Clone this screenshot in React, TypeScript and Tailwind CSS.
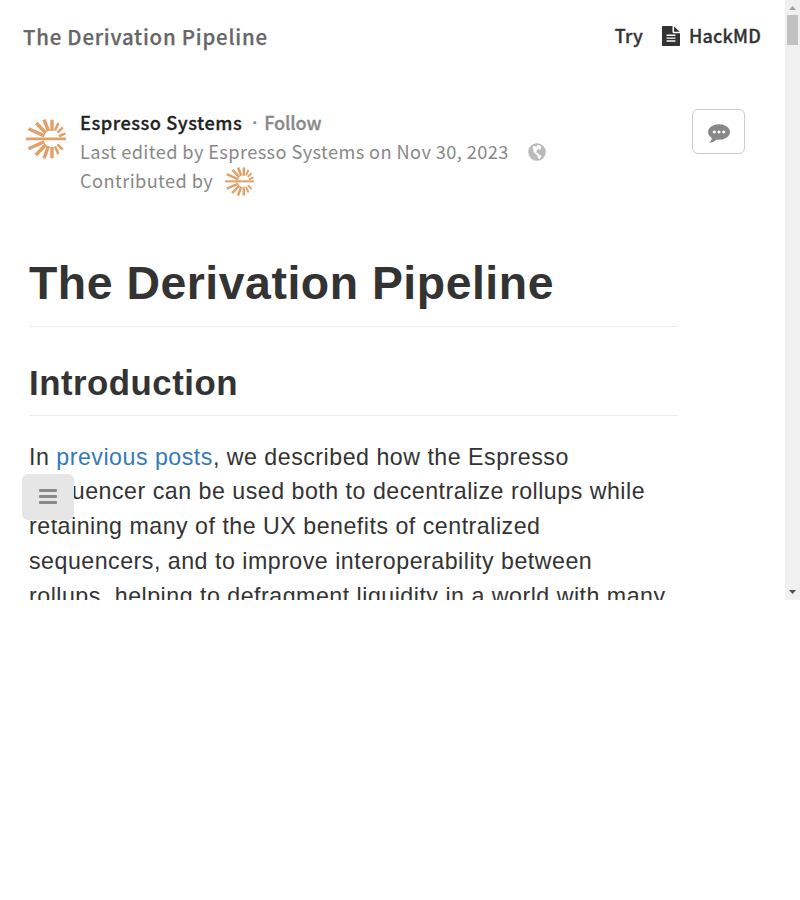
import React from 'react';

const sans = "font-['Noto_Sans_CJK_SC','Open_Sans',sans-serif]";

function Sunburst({ className }: { className: string }) {
  return (
    <svg viewBox="0 0 40 40" className={className} fill="none" stroke="#e0a068">
      <path strokeWidth="2.8" d="M0 19.8H40" />
      <path
        strokeWidth="3.4"
        d="M2.5 9.8 18.3 16.9M10.3 4 19.8 14M18 .7 22.5 12M26 .7V12M2.5 29.7 18.3 22.8M9.8 36 20 25.5M18 39.3 22.5 27M26 39.3V28"
      />
      <path strokeWidth="2.6" d="M32.4 4 29 11.5M36.8 8.4 31.5 13.7M39.3 14.4 33 17.2M32.4 35 29 27.5M36.8 30.6 31.5 25.3" />
    </svg>
  );
}

export default function App() {
  return (
    <div className="h-[900px] w-[800px] overflow-hidden bg-white">
      <div className="relative flex h-[600px] overflow-hidden">
        <main className="h-[600px] w-[785px] overflow-hidden">
          <header className={`flex h-[73px] items-center justify-between pl-[23px] pr-[24px] ${sans}`}>
            <span className="whitespace-nowrap text-[20.4px] font-medium tracking-[0.78px] text-[#666] [-webkit-text-stroke:0.25px_#666]">The Derivation Pipeline</span>
            <div className="flex items-center whitespace-nowrap text-[18px] font-medium tracking-[0.2px] text-[#333] [-webkit-text-stroke:0.3px_#333]">
              <span className="-mt-[2px]">Try</span>
              <svg viewBox="128 0 1536 1792" preserveAspectRatio="none" className="-mt-[1px] ml-[19px] mr-[9px] h-[20px] w-[18px]" fill="#333">
                <path d="M1596 476q14 14 28 36h-472v-472q22 14 36 28zm-476 164h544v1056q0 40-28 68t-68 28h-1344q-40 0-68-28t-28-68v-1600q0-40 28-68t68-28h800v544q0 40 28 68t68 28zm160 736v-64q0-14-9-23t-23-9h-704q-14 0-23 9t-9 23v64q0 14 9 23t23 9h704q14 0 23-9t9-23zm0-256v-64q0-14-9-23t-23-9h-704q-14 0-23 9t-9 23v64q0 14 9 23t23 9h704q14 0 23-9t9-23zm0-256v-64q0-14-9-23t-23-9h-704q-14 0-23 9t-9 23v64q0 14 9 23t23 9h704q14 0 23-9t9-23z" />
              </svg>
              <span className="-mt-[2px]">HackMD</span>
            </div>
          </header>
          <section className={`flex h-[176px] pl-[26px] pr-[40px] pt-[36px] ${sans}`}>
            <Sunburst className="mt-[10px] h-[40px] w-[40px]" />
            <div className="-mt-[1px] ml-[14px] flex-1 whitespace-nowrap text-[18.2px] leading-[29px] tracking-[0.4px] text-[#888]">
              <div className="flex h-[29px] font-medium">
                <span className="tracking-[0.53px] text-[#222] [-webkit-text-stroke:0.3px_#222]">Espresso Systems</span>
                <span className="ml-[10px] w-[6px] font-['Noto_Sans',sans-serif] leading-[29px] [-webkit-text-stroke:0.3px_#888]">·</span>
                <span className="ml-[6px] tracking-[-0.15px] [-webkit-text-stroke:0.3px_#888]">Follow</span>
              </div>
              <div className="flex h-[29px] items-center">
                <span>Last edited by Espresso Systems on Nov 30, 2023</span>
                <svg viewBox="0 0 18 18" className="ml-[19px] h-[18px] w-[18px]">
                  <circle cx="9" cy="9" r="8.8" fill="#bbb" />
                  <path fill="#fff" d="M4.5 3.8 6.5 3 8.2 3.8 9.3 2 11.5 2.3 13.4 4 12.6 5.2 13 6.4 11.5 7 11 5.8 9.5 6.5 8.3 8.4 8.5 9.7 10 10.3 11.3 12 13.5 12.5 12.6 15 11.2 16.2 9.9 14.2 9.3 12.3 7.3 10.6 5.5 8.7 5.2 6.2Z" />
                </svg>
              </div>
              <div className="flex h-[29px] items-center">
                <span>Contributed by</span>
                <Sunburst className="ml-[12px] mt-[2px] h-[29px] w-[29px]" />
              </div>
            </div>
            <button className="flex h-[45px] w-[53px] items-center justify-center rounded-[6px] border border-[#ccc] bg-white">
              <svg viewBox="0 0 1792 1792" className="h-[22px] w-[22px]" fill="#888">
                <path d="M640 896q0-53-37.5-90.5t-90.5-37.5-90.5 37.5-37.5 90.5 37.5 90.5 90.5 37.5 90.5-37.5 37.5-90.5zm384 0q0-53-37.5-90.5t-90.5-37.5-90.5 37.5-37.5 90.5 37.5 90.5 90.5 37.5 90.5-37.5 37.5-90.5zm384 0q0-53-37.5-90.5t-90.5-37.5-90.5 37.5-37.5 90.5 37.5 90.5 90.5 37.5 90.5-37.5 37.5-90.5zm384 0q0 174-120 321.5t-326 233-450 85.5q-110 0-211-18-173 173-435 229-52 10-86 13-12 1-22-6t-13-18q-4-15 20-37 5-5 23.5-21.5t25.5-23.5 23.5-25.5 24-31.5 20.5-37 20-48 14.5-57.5 12.5-72.5q-146-90-229.5-216.5t-83.5-269.5q0-174 120-321.5t326-233 450-85.5 450 85.5 326 233 120 321.5z" />
              </svg>
            </button>
          </section>
          <article className="ml-[29px] w-[649px] whitespace-nowrap font-['Liberation_Sans',Arial,sans-serif] text-[#333]">
            <h1 className="h-[78px] border-b border-[#eee] text-[46.4px] font-bold leading-[68px] tracking-[0.52px]">The Derivation Pipeline</h1>
            <h2 className="h-[89px] border-b border-[#eee] pt-[30px] text-[34.8px] font-bold leading-[52px] tracking-[0.5px]">Introduction</h2>
            <p className="mt-[23.6px] text-[23.2px] leading-[34.8px] tracking-[0.505px]">
              In <a className="text-[#337ab7]">previous posts</a>, we described how the Espresso<br />
              Sequencer can be used both to decentralize rollups while<br />
              retaining many of the UX benefits of centralized<br />
              sequencers, and to improve interoperability between<br />
              rollups, helping to defragment liquidity in a world with many
            </p>
          </article>
        </main>
        <aside className="flex h-[600px] w-[15px] flex-col items-center justify-between bg-[#f0f0f0]">
          <div className="flex flex-col items-center">
            <svg viewBox="0 0 15 15" className="h-[15px] w-[15px]"><path fill="#a3a3a3" d="M4 10 7.5 6 11 10Z" /></svg>
            <div className="h-[30px] w-[11px] bg-[#c1c1c1]" />
          </div>
          <svg viewBox="0 0 15 15" className="h-[15px] w-[15px]"><path fill="#505050" d="M4 5H11L7.5 9Z" /></svg>
        </aside>
        <button className="absolute left-[22px] top-[474px] flex h-[46px] w-[52px] flex-col items-center justify-center gap-[3px] rounded-[6px] bg-[#e6e6e6] pb-[1px]">
          <span className="h-[3px] w-[18px] rounded-[1px] bg-[#888]" />
          <span className="h-[3px] w-[18px] rounded-[1px] bg-[#888]" />
          <span className="h-[3px] w-[18px] rounded-[1px] bg-[#888]" />
        </button>
      </div>
    </div>
  );
}
